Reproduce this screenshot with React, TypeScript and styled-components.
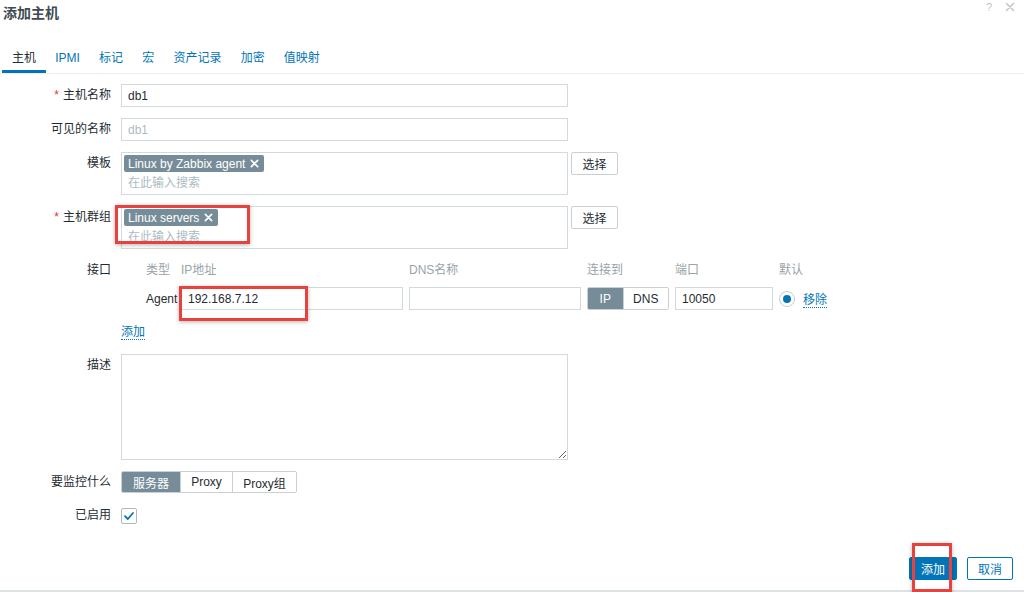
import React from 'react';
import styled, { createGlobalStyle } from 'styled-components';

const GlobalStyle = createGlobalStyle`
  html, body {
    margin: 0;
    padding: 0;
    background: #fff;
  }
  body {
    font-family: "Liberation Sans", Arial, "Noto Sans CJK SC", sans-serif;
    font-size: 12px;
    color: #1f2c33;
  }
  * {
    box-sizing: border-box;
  }
`;

const Dialog = styled.div`
  width: 1024px;
  height: 592px;
  display: flex;
  flex-direction: column;
  border-bottom: 2px solid #dde2e5;
`;

const Header = styled.div`
  display: flex;
  justify-content: space-between;
  align-items: flex-start;
  padding: 0 9px 0 3px;
`;

const Title = styled.h4`
  margin: 0;
  font-size: 14px;
  font-weight: bold;
  line-height: 26px;
  color: #404b51;
`;

const HeaderTools = styled.div`
  display: flex;
  align-items: center;
  gap: 13px;
  padding-top: 1px;
  color: #b8c2c7;
`;

const HelpMark = styled.span`
  font-size: 11px;
  line-height: 12px;
`;

const TabBar = styled.div`
  display: flex;
  margin-top: 18px;
  padding-left: 2.4px;
  border-bottom: 1px solid #ebeef0;
`;

const Tab = styled.div<{ $active?: boolean }>`
  height: 29px;
  padding: 3px 9.6px 0;
  line-height: 23px;
  border-bottom: 3px solid ${p => (p.$active ? '#0275b8' : 'transparent')};
  color: ${p => (p.$active ? '#1f2c33' : '#0275b8')};
  white-space: nowrap;
`;

const Form = styled.div`
  display: grid;
  grid-template-columns: 111px 1fr;
  column-gap: 10px;
  row-gap: 11px;
  align-items: start;
  padding-top: 10px;
`;

const Label = styled.div<{ $lh?: number }>`
  text-align: right;
  line-height: ${p => p.$lh ?? 23}px;
  white-space: nowrap;
`;

const Req = styled.span`
  color: #e33734;
  margin-right: 4px;
`;

const Field = styled.div`
  display: flex;
  align-items: flex-start;
  gap: 3px;
`;

const TextInput = styled.input<{ $w: number }>`
  width: ${p => p.$w}px;
  height: 23px;
  border: 1px solid #d3dadd;
  padding: 0 6px;
  font: inherit;
  color: #1f2c33;
  background: #fff;
  outline: none;
  &::placeholder {
    color: #acbbc2;
  }
`;

const Anchor = styled.div`
  position: relative;
  display: flex;
`;

const RedMark = styled.span<{ $l: number; $t: number; $w: number; $h: number }>`
  position: absolute;
  left: ${p => p.$l}px;
  top: ${p => p.$t}px;
  width: ${p => p.$w}px;
  height: ${p => p.$h}px;
  border: 3px solid #e8423e;
  box-shadow: 0 1px 4px rgba(0, 0, 0, 0.3);
  pointer-events: none;
  z-index: 2;
`;

const MultiBox = styled.div`
  position: relative;
  width: 447px;
  height: 43px;
  border: 1px solid #d3dadd;
  padding: 2px;
`;

const Tag = styled.span`
  display: inline-flex;
  align-items: center;
  gap: 5px;
  height: 17px;
  padding: 0 5px 0 4px;
  background: #768d99;
  color: #fff;
  border-radius: 2px;
  white-space: nowrap;
`;

const SearchLine = styled.div`
  height: 18px;
  line-height: 18px;
  margin-top: 2px;
  padding-left: 4px;
  color: #acbbc2;
`;

const SelectButton = styled.button`
  width: 47px;
  height: 23px;
  padding: 0;
  border: 1px solid #c9d0d4;
  border-radius: 2px;
  background: #fff;
  font: inherit;
  color: #1f2c33;
`;

const IfaceGrid = styled.div`
  display: grid;
  grid-template-columns: 19px 29px 222px 172px 82px 98px auto;
  grid-template-rows: 20px 23px;
  column-gap: 6px;
  row-gap: 7px;
  align-items: center;
`;

const ColHead = styled.div`
  color: #9aa3a8;
  line-height: 20px;
  white-space: nowrap;
`;

const CellText = styled.div`
  white-space: nowrap;
`;

const Segmented = styled.div<{ $h: number }>`
  display: inline-flex;
  height: ${p => p.$h}px;
  border: 1px solid #c9d0d4;
  border-radius: 2px;
  overflow: hidden;
`;

const Segment = styled.span<{ $on?: boolean; $w: number }>`
  width: ${p => p.$w}px;
  display: flex;
  align-items: center;
  justify-content: center;
  background: ${p => (p.$on ? '#768d99' : '#fff')};
  color: ${p => (p.$on ? '#fff' : '#1f2c33')};
  white-space: nowrap;
  & + & {
    border-left: 1px solid #c9d0d4;
  }
`;

const DefaultCell = styled.div`
  display: flex;
  align-items: center;
  gap: 8px;
`;

const Radio = styled.span`
  width: 16px;
  height: 16px;
  border-radius: 50%;
  border: 1px solid #c4cdd2;
  display: flex;
  align-items: center;
  justify-content: center;
  &::after {
    content: '';
    width: 8px;
    height: 8px;
    border-radius: 50%;
    background: #0275b8;
  }
`;

const DottedLink = styled.a`
  color: #0275b8;
  text-decoration: none;
  border-bottom: 1px dotted #0275b8;
  cursor: pointer;
`;

const AddRow = styled.div`
  margin-top: 11px;
  line-height: 22px;
`;

const TextArea = styled.textarea`
  display: block;
  width: 447px;
  height: 106px;
  border: 1px solid #d3dadd;
  font: inherit;
  outline: none;
  margin: 0;
`;

const CheckRow = styled.div`
  height: 23px;
  display: flex;
  align-items: center;
`;

const CheckBox = styled.span`
  width: 16px;
  height: 16px;
  border: 1px solid #acbbc2;
  border-radius: 2px;
  display: flex;
  align-items: center;
  justify-content: center;
  background: #fff;
`;

const Footer = styled.div`
  margin-top: auto;
  display: flex;
  justify-content: flex-end;
  gap: 10px;
  padding: 0 11px 10px 0;
`;

const FooterButton = styled.button<{ $primary?: boolean; $w: number }>`
  width: ${p => p.$w}px;
  height: 23px;
  padding: 0;
  border: 1px solid #0275b8;
  border-radius: 2px;
  background: ${p => (p.$primary ? '#0275b8' : '#fff')};
  color: ${p => (p.$primary ? '#fff' : '#0275b8')};
  font: inherit;
`;

function Cross({ size, color, width }: { size: number; color: string; width: number }) {
  return (
    <svg width={size} height={size} viewBox="0 0 10 10">
      <path d="M1.5 1.5 L8.5 8.5 M8.5 1.5 L1.5 8.5" stroke={color} strokeWidth={width} strokeLinecap="round" />
    </svg>
  );
}

const tabs = ['主机', 'IPMI', '标记', '宏', '资产记录', '加密', '值映射'];

export default function App() {
  return (
    <>
      <GlobalStyle />
      <Dialog>
        <Header>
          <Title>添加主机</Title>
          <HeaderTools>
            <HelpMark>?</HelpMark>
            <Cross size={10} color="#b8c2c7" width={1.4} />
          </HeaderTools>
        </Header>

        <TabBar>
          {tabs.map((t, i) => (
            <Tab key={t} $active={i === 0}>
              {t}
            </Tab>
          ))}
        </TabBar>

        <Form>
          <Label>
            <Req>*</Req>主机名称
          </Label>
          <Field>
            <TextInput $w={447} defaultValue="db1" />
          </Field>

          <Label>可见的名称</Label>
          <Field>
            <TextInput $w={447} placeholder="db1" />
          </Field>

          <Label>模板</Label>
          <Field>
            <MultiBox>
              <Tag>
                Linux by Zabbix agent
                <Cross size={9} color="#fff" width={1.8} />
              </Tag>
              <SearchLine>在此输入搜索</SearchLine>
            </MultiBox>
            <SelectButton>选择</SelectButton>
          </Field>

          <Label>
            <Req>*</Req>主机群组
          </Label>
          <Field>
            <MultiBox>
              <Tag>
                Linux servers
                <Cross size={9} color="#fff" width={1.8} />
              </Tag>
              <SearchLine>在此输入搜索</SearchLine>
              <RedMark $l={-7} $t={-2} $w={135} $h={39} />
            </MultiBox>
            <SelectButton>选择</SelectButton>
          </Field>

          <Label $lh={20}>接口</Label>
          <div>
            <IfaceGrid>
              <span />
              <ColHead>类型</ColHead>
              <ColHead>IP地址</ColHead>
              <ColHead>DNS名称</ColHead>
              <ColHead>连接到</ColHead>
              <ColHead>端口</ColHead>
              <ColHead>默认</ColHead>

              <span />
              <CellText>Agent</CellText>
              <Anchor>
                <TextInput $w={222} defaultValue="192.168.7.12" />
                <RedMark $l={-2} $t={-1} $w={129} $h={35} />
              </Anchor>
              <TextInput $w={172} />
              <Segmented $h={23}>
                <Segment $on $w={35}>IP</Segment>
                <Segment $w={46}>DNS</Segment>
              </Segmented>
              <TextInput $w={98} defaultValue="10050" />
              <DefaultCell>
                <Radio />
                <DottedLink>移除</DottedLink>
              </DefaultCell>
            </IfaceGrid>
            <AddRow>
              <DottedLink>添加</DottedLink>
            </AddRow>
          </div>

          <Label>描述</Label>
          <Field>
            <TextArea />
          </Field>

          <Label $lh={22}>要监控什么</Label>
          <Field>
            <Segmented $h={22}>
              <Segment $on $w={58}>服务器</Segment>
              <Segment $w={52}>Proxy</Segment>
              <Segment $w={64}>Proxy组</Segment>
            </Segmented>
          </Field>

          <Label>已启用</Label>
          <CheckRow>
            <CheckBox>
              <svg width="12" height="12" viewBox="0 0 12 12">
                <path d="M2 6.2 L4.8 9 L10 3" fill="none" stroke="#0275b8" strokeWidth="1.8" strokeLinecap="round" strokeLinejoin="round" />
              </svg>
            </CheckBox>
          </CheckRow>
        </Form>

        <Footer>
          <Anchor>
            <FooterButton $primary $w={48}>添加</FooterButton>
            <RedMark $l={3} $t={-14} $w={40} $h={49} />
          </Anchor>
          <FooterButton $w={46}>取消</FooterButton>
        </Footer>
      </Dialog>
    </>
  );
}
